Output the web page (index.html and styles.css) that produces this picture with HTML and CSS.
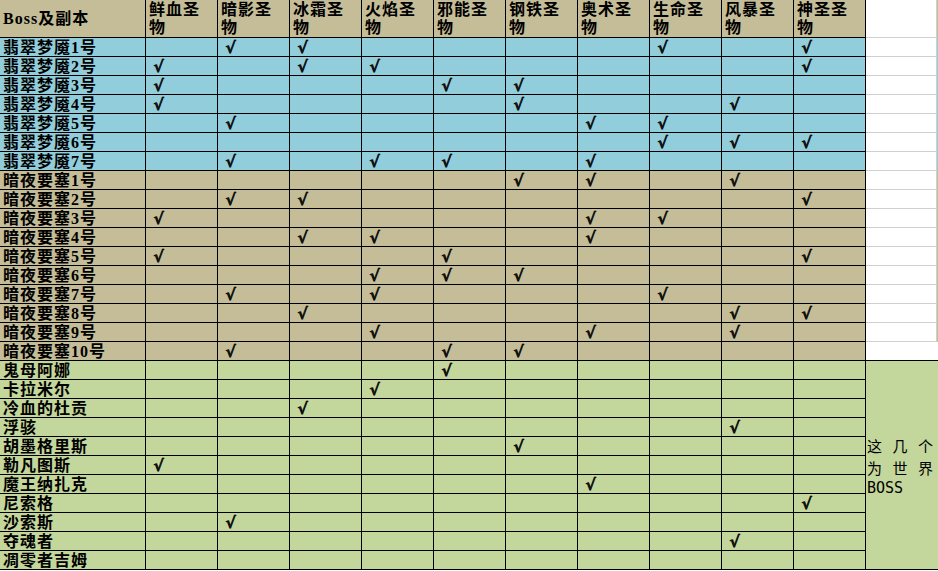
FILE: index.html
```html
<!DOCTYPE html>
<html lang="zh-CN">
<head>
<meta charset="utf-8">
<title>Boss及副本 圣物表</title>
<link rel="stylesheet" href="styles.css">
</head>
<body>
<div class="sheet">
  <div class="r head">
    <span class="n hn">Boss及副本</span>
    <span>鲜血圣<br>物</span><span>暗影圣<br>物</span><span>冰霜圣<br>物</span><span>火焰圣<br>物</span><span>邪能圣<br>物</span>
    <span>钢铁圣<br>物</span><span>奥术圣<br>物</span><span>生命圣<br>物</span><span>风暴圣<br>物</span><span>神圣圣<br>物</span>
    <span class="x"></span>
  </div>

  <div class="r blue"><span class="n">翡翠梦魇1号</span><span></span><span class="k">√</span><span class="k">√</span><span></span><span></span><span></span><span></span><span class="k">√</span><span></span><span class="k">√</span><span class="x"></span></div>
  <div class="r blue"><span class="n">翡翠梦魇2号</span><span class="k">√</span><span></span><span class="k">√</span><span class="k">√</span><span></span><span></span><span></span><span></span><span></span><span class="k">√</span><span class="x"></span></div>
  <div class="r blue"><span class="n">翡翠梦魇3号</span><span class="k">√</span><span></span><span></span><span></span><span class="k">√</span><span class="k">√</span><span></span><span></span><span></span><span></span><span class="x"></span></div>
  <div class="r blue"><span class="n">翡翠梦魇4号</span><span class="k">√</span><span></span><span></span><span></span><span></span><span class="k">√</span><span></span><span></span><span class="k">√</span><span></span><span class="x"></span></div>
  <div class="r blue"><span class="n">翡翠梦魇5号</span><span></span><span class="k">√</span><span></span><span></span><span></span><span></span><span class="k">√</span><span class="k">√</span><span></span><span></span><span class="x"></span></div>
  <div class="r blue"><span class="n">翡翠梦魇6号</span><span></span><span></span><span></span><span></span><span></span><span></span><span></span><span class="k">√</span><span class="k">√</span><span class="k">√</span><span class="x"></span></div>
  <div class="r blue"><span class="n">翡翠梦魇7号</span><span></span><span class="k">√</span><span></span><span class="k">√</span><span class="k">√</span><span></span><span class="k">√</span><span></span><span></span><span></span><span class="x"></span></div>

  <div class="r tan"><span class="n">暗夜要塞1号</span><span></span><span></span><span></span><span></span><span></span><span class="k">√</span><span class="k">√</span><span></span><span class="k">√</span><span></span><span class="x"></span></div>
  <div class="r tan"><span class="n">暗夜要塞2号</span><span></span><span class="k">√</span><span class="k">√</span><span></span><span></span><span></span><span></span><span></span><span></span><span class="k">√</span><span class="x"></span></div>
  <div class="r tan"><span class="n">暗夜要塞3号</span><span class="k">√</span><span></span><span></span><span></span><span></span><span></span><span class="k">√</span><span class="k">√</span><span></span><span></span><span class="x"></span></div>
  <div class="r tan"><span class="n">暗夜要塞4号</span><span></span><span></span><span class="k">√</span><span class="k">√</span><span></span><span></span><span class="k">√</span><span></span><span></span><span></span><span class="x"></span></div>
  <div class="r tan"><span class="n">暗夜要塞5号</span><span class="k">√</span><span></span><span></span><span></span><span class="k">√</span><span></span><span></span><span></span><span></span><span class="k">√</span><span class="x"></span></div>
  <div class="r tan"><span class="n">暗夜要塞6号</span><span></span><span></span><span></span><span class="k">√</span><span class="k">√</span><span class="k">√</span><span></span><span></span><span></span><span></span><span class="x"></span></div>
  <div class="r tan"><span class="n">暗夜要塞7号</span><span></span><span class="k">√</span><span></span><span class="k">√</span><span></span><span></span><span></span><span class="k">√</span><span></span><span></span><span class="x"></span></div>
  <div class="r tan"><span class="n">暗夜要塞8号</span><span></span><span></span><span class="k">√</span><span></span><span></span><span></span><span></span><span></span><span class="k">√</span><span class="k">√</span><span class="x"></span></div>
  <div class="r tan"><span class="n">暗夜要塞9号</span><span></span><span></span><span></span><span class="k">√</span><span></span><span></span><span class="k">√</span><span></span><span class="k">√</span><span></span><span class="x"></span></div>
  <div class="r tan"><span class="n">暗夜要塞10号</span><span></span><span class="k">√</span><span></span><span></span><span class="k">√</span><span class="k">√</span><span></span><span></span><span></span><span></span><span class="x last"></span></div>

  <div class="gb">
    <div class="rows">
      <div class="r green"><span class="n">鬼母阿娜</span><span></span><span></span><span></span><span></span><span class="k">√</span><span></span><span></span><span></span><span></span><span></span></div>
      <div class="r green"><span class="n">卡拉米尔</span><span></span><span></span><span></span><span class="k">√</span><span></span><span></span><span></span><span></span><span></span><span></span></div>
      <div class="r green"><span class="n">冷血的杜贡</span><span></span><span></span><span class="k">√</span><span></span><span></span><span></span><span></span><span></span><span></span><span></span></div>
      <div class="r green"><span class="n">浮骇</span><span></span><span></span><span></span><span></span><span></span><span></span><span></span><span></span><span class="k">√</span><span></span></div>
      <div class="r green"><span class="n">胡墨格里斯</span><span></span><span></span><span></span><span></span><span></span><span class="k">√</span><span></span><span></span><span></span><span></span></div>
      <div class="r green"><span class="n">勒凡图斯</span><span class="k">√</span><span></span><span></span><span></span><span></span><span></span><span></span><span></span><span></span><span></span></div>
      <div class="r green"><span class="n">魔王纳扎克</span><span></span><span></span><span></span><span></span><span></span><span></span><span class="k">√</span><span></span><span></span><span></span></div>
      <div class="r green"><span class="n">尼索格</span><span></span><span></span><span></span><span></span><span></span><span></span><span></span><span></span><span></span><span class="k">√</span></div>
      <div class="r green"><span class="n">沙索斯</span><span></span><span class="k">√</span><span></span><span></span><span></span><span></span><span></span><span></span><span></span><span></span></div>
      <div class="r green"><span class="n">夺魂者</span><span></span><span></span><span></span><span></span><span></span><span></span><span></span><span></span><span class="k">√</span><span></span></div>
      <div class="r green"><span class="n">凋零者吉姆</span><span></span><span></span><span></span><span></span><span></span><span></span><span></span><span></span><span></span><span></span></div>
    </div>
    <div class="world">
      <span class="jl">这几个</span>
      <span class="jl">为世界</span>
      <span class="bl">BOSS</span>
    </div>
  </div>
</div>
</body>
</html>
```

FILE: styles.css
```css
html, body {
  margin: 0;
  padding: 0;
  background: #ffffff;
}

body {
  font-family: "Liberation Serif", "Noto Sans CJK SC", serif;
  color: #000;
}

.sheet {
  width: 938px;
}

.r {
  display: grid;
  grid-template-columns: 146px repeat(10, 72px) 72px;
  height: 19px;
}

.r > span {
  box-sizing: border-box;
  border-right: 1px solid #000;
  border-bottom: 1px solid #000;
  font-size: 16px;
  font-weight: 700;
  line-height: 18px;
  white-space: nowrap;
  overflow: hidden;
}

.r > .n {
  padding: 1px 0 0 3px;
  letter-spacing: 1px;
}

.r > .k {
  font-family: "DejaVu Sans", sans-serif;
  font-size: 16px;
  font-weight: 700;
  font-style: italic;
  padding: 1px 0 0 7px;
  color: #111;
  text-shadow: 0.6px 0 0 #111;
}

.head {
  height: 38px;
  background: #c4bd97;
}

.head > span {
  line-height: 18px;
  padding: 1px 0 0 3px;
  letter-spacing: 1px;
}

.head > .hn {
  display: flex;
  align-items: center;
  padding-top: 0;
}

.blue { background: #92cddc; }
.tan { background: #c4bd97; }
.green { background: #c3d69b; }

.r > .x {
  background: #ffffff;
  border-right: 1px solid #d0d0d0;
  border-bottom: 1px solid #d0d0d0;
  margin-right: 1px;
}

.r > .x.last {
  border-bottom-color: #000;
  margin-right: 0;
  border-right: none;
}

.gb {
  display: flex;
}

.rows {
  width: 866px;
}

.green {
  grid-template-columns: 146px repeat(10, 72px);
}

.world {
  flex: 1;
  box-sizing: border-box;
  background: #c3d69b;
  border-bottom: 1px solid #000;
  display: flex;
  flex-direction: column;
  justify-content: center;
  padding: 2px 5px 0 1px;
}

.world .jl {
  display: block;
  text-align: justify;
  text-align-last: justify;
  font-family: "Noto Sans CJK SC", sans-serif;
  font-size: 15px;
  line-height: 22px;
}

.world .bl {
  display: block;
  font-family: "DejaVu Sans Mono", monospace;
  font-size: 15px;
  line-height: 18px;
}
```
